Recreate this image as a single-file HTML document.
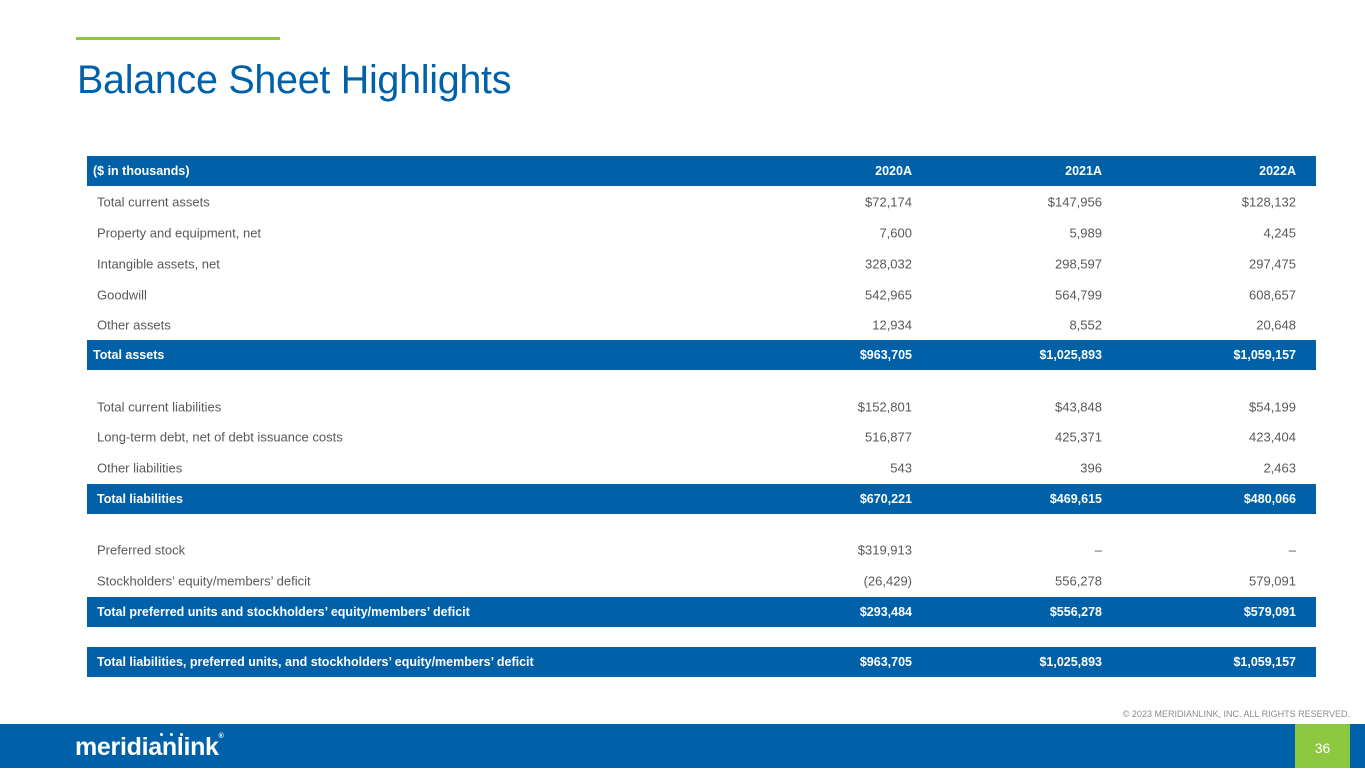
<!DOCTYPE html><html><head><style>
body{margin:0;width:1365px;height:768px;position:relative;background:#fff;font-family:"Liberation Sans",sans-serif;overflow:hidden}
.a{position:absolute}
.bar{position:absolute;left:87px;width:1229px;height:30px;background:#0061a8}
.t{position:absolute;font-size:13px;color:#595959;white-space:nowrap;transform:translateY(-50%)}
.b{color:#fff;font-weight:bold;font-size:12.5px}
.r{text-align:right}
</style></head><body>
<div class="a" style="left:76px;top:37px;width:204px;height:3px;background:#8dc63f"></div>
<div class="a" style="left:77px;top:55px;font-size:39.5px;color:#0061a8;letter-spacing:-0.3px;line-height:50px">Balance Sheet Highlights</div>
<div class="bar" style="top:156px"></div>
<div class="bar" style="top:340px"></div>
<div class="bar" style="top:484px"></div>
<div class="bar" style="top:597px"></div>
<div class="bar" style="top:647px"></div>
<div id="rows"></div>
<script>
var R=[[171,"($ in thousands)","2020A","2021A","2022A",1,93],
[202,"Total current assets","$72,174","$147,956","$128,132",0,97],
[233,"Property and equipment, net","7,600","5,989","4,245",0,97],
[264,"Intangible assets, net","328,032","298,597","297,475",0,97],
[295,"Goodwill","542,965","564,799","608,657",0,97],
[325,"Other assets","12,934","8,552","20,648",0,97],
[355,"Total assets","$963,705","$1,025,893","$1,059,157",1,93],
[407,"Total current liabilities","$152,801","$43,848","$54,199",0,97],
[437,"Long-term debt, net of debt issuance costs","516,877","425,371","423,404",0,97],
[468,"Other liabilities","543","396","2,463",0,97],
[499,"Total liabilities","$670,221","$469,615","$480,066",1,97],
[550,"Preferred stock","$319,913","–","–",0,97],
[581,"Stockholders’ equity/members’ deficit","(26,429)","556,278","579,091",0,97],
[612,"Total preferred units and stockholders’ equity/members’ deficit","$293,484","$556,278","$579,091",1,97],
[662,"Total liabilities, preferred units, and stockholders’ equity/members’ deficit","$963,705","$1,025,893","$1,059,157",1,97]];
var h="";R.forEach(function(r){var c=r[5]?"t b":"t";
h+='<div class="'+c+'" style="left:'+r[6]+'px;top:'+r[0]+'px">'+r[1]+'</div>';
[[912,r[2]],[1102,r[3]],[1296,r[4]]].forEach(function(x){h+='<div class="'+c+' r" style="right:'+(1365-x[0])+'px;top:'+r[0]+'px">'+x[1]+'</div>';});});
document.getElementById("rows").innerHTML=h;
</script>
<div class="a" style="right:15px;top:709px;font-size:9px;color:#8c8c8c">© 2023 MERIDIANLINK, INC. ALL RIGHTS RESERVED.</div>
<div class="a" style="left:0;top:724px;width:1365px;height:44px;background:#0061a8"></div>
<div class="a" style="left:1295px;top:724px;width:55px;height:44px;background:#8dc63f;color:#fff;font-size:14px;text-align:center;line-height:48px">36</div>
<div class="a" style="left:75px;top:733px;color:#fff;font-size:25px;font-weight:bold;letter-spacing:-0.3px">meridianlink<span style="font-size:7px;vertical-align:top">®</span></div>
<div class="a" style="left:160px;top:733px;width:3px;height:3px;border-radius:50%;background:#fff;box-shadow:10px 0 #fff,20px 0 #fff"></div>
</body></html>
